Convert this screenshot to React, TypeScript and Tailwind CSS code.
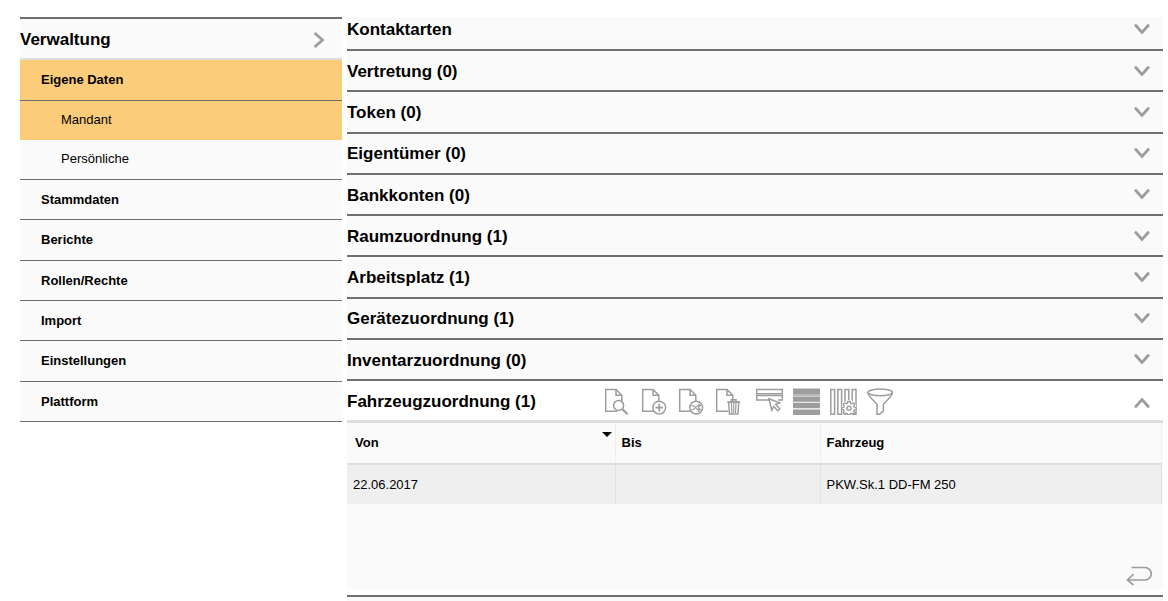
import type { ReactNode } from "react";

const menuItems = ["Stammdaten", "Berichte", "Rollen/Rechte", "Import", "Einstellungen", "Plattform"];

const sections = [
    "Vertretung (0)",
    "Token (0)",
    "Eigentümer (0)",
    "Bankkonten (0)",
    "Raumzuordnung (1)",
    "Arbeitsplatz (1)",
    "Gerätezuordnung (1)",
    "Inventarzuordnung (0)",
];

function Chevron({ className = "" }: { className?: string }) {
    return (
        <svg
            viewBox="0 0 16 12"
            className={`h-3 w-4 shrink-0 ${className}`}
            fill="none"
            stroke="#9d9d9d"
            strokeWidth="2.8"
            strokeLinecap="round"
        >
            <path d="M1.8 1.5 8 8.5 14.2 1.5" />
        </svg>
    );
}

function ToolButton({ label, children }: { label: string; children: ReactNode }) {
    return (
        <button type="button" aria-label={label} title={label} className="cursor-pointer">
            <svg
                viewBox="0 0 27 27"
                className="block h-[27px] w-[27px]"
                fill="none"
                stroke="#9d9d9d"
                strokeWidth="1.5"
            >
                {children}
            </svg>
        </button>
    );
}

function DocumentShape() {
    return (
        <>
            <path d="M13 23.2H1.7V1.5h10.3l5.8 5.8V13" />
            <path d="M12 1.5v5.8h5.8" />
        </>
    );
}

function Toolbar() {
    return (
        <div className="flex gap-3.5">
            <div className="flex gap-[10px]">
                <ToolButton label="Anzeigen">
                    <DocumentShape />
                    <circle cx="14.6" cy="17.4" r="5" fill="#fff" />
                    <path d="m18.2 21 5.4 5.2" strokeWidth="2.2" />
                </ToolButton>
                <ToolButton label="Neu">
                    <DocumentShape />
                    <circle cx="18.2" cy="19.6" r="6.4" fill="#fff" />
                    <path d="M18.2 15.8v7.6M14.4 19.6H22" strokeWidth="1.7" />
                </ToolButton>
                <ToolButton label="Zuordnen">
                    <DocumentShape />
                    <circle cx="18.2" cy="19.6" r="6.4" fill="#fff" />
                    <path
                        d="M13.4 17.6h1.8l4.6 4h3M13.4 21.6h1.8l4.6-4h3M20 15.4l2.4 2.2-2.4 2.1M20 19.5l2.4 2.1-2.4 2.2"
                        strokeWidth="1.2"
                    />
                </ToolButton>
                <ToolButton label="Löschen">
                    <DocumentShape />
                    <path d="M13.6 14h10.2l-.9 12H14.5z" fill="#fff" />
                    <path d="M12.2 14h13M16.4 13.5v-1.8h4.6v1.8" />
                    <path d="m16.4 15 .5 10M18.7 15v10M21 15l-.5 10" strokeWidth="1.2" />
                </ToolButton>
            </div>
            <div className="flex gap-[10px]">
                <ToolButton label="Zeile auswählen">
                    <path d="M.7 1.5h25.6v4.2H.7z" />
                    <path d="M14 12H.7V7.5h25.6V12H22" />
                    <path d="m12.8 10.8 10.8 4-4 1.8 4.2 4.2-1.9 1.9-4.2-4.2-1.8 3.6z" fill="#fff" />
                </ToolButton>
                <ToolButton label="Zeilen">
                    <path d="M0 .5h27v7.3H0zM0 8.6h27v5.2H0zM0 14.8h27v5.5H0zM0 21.5h27V27H0z" fill="#9d9d9d" stroke="none" />
                    <path d="M0 6.8h27" stroke="#c4c4c4" strokeWidth="1" />
                </ToolButton>
                <ToolButton label="Spalten einstellen">
                    <path d="M.8 1.5h3.8v24.7H.8zM7.8 1.5h3.8v24.7H7.8zM15 1.5h3.8v24.7H15zM22.2 1.5H26v24.7h-3.8z" />
                    <circle cx="19" cy="19.5" r="7.4" fill="#fff" stroke="none" />
                    <path
                        d="M17.8 13.5h2.4l.3 1.8 1.2.5 1.5-1 1.6 1.6-1 1.5.5 1.2 1.8.3v2.2l-1.8.3-.5 1.2 1 1.5-1.6 1.6-1.5-1-1.2.5-.3 1h-2.4l-.3-1-1.2-.5-1.5 1-1.6-1.6 1-1.5-.5-1.2-1.8-.3v-2.2l1.8-.3.5-1.2-1-1.5 1.6-1.6 1.5 1 1.2-.5z"
                        strokeWidth="1.4"
                    />
                    <circle cx="19" cy="20.3" r="2" strokeWidth="1.4" />
                </ToolButton>
                <ToolButton label="Filter">
                    <ellipse cx="13.2" cy="4.4" rx="12.2" ry="3.4" />
                    <path d="M1 4.8c0 3 2 4 4.4 6.6l4.6 4.8v10h2.6l3.8-3.4v-6.6l4.6-4.8c2.4-2.6 4.4-3.6 4.4-6.6" />
                </ToolButton>
            </div>
        </div>
    );
}

function Sidebar() {
    return (
        <nav className="w-[322px] shrink-0 border-t-2 border-[#6f6f6f] bg-[#fafafa]">
            <button
                type="button"
                className="flex h-[41px] w-full items-center justify-between border-b-2 border-[#dedede] pt-0.5 pr-3.5 text-[17px] font-bold"
            >
                Verwaltung
                <Chevron className="-rotate-90" />
            </button>
            <ul>
                <li>
                    <a
                        href="#"
                        className="flex h-[41px] items-center border-b border-[#6f6f6f] bg-[#fbcd7b] pl-[21px] font-bold"
                    >
                        Eigene Daten
                    </a>
                    <ul className="border-b border-[#6f6f6f]">
                        <li>
                            <a href="#" className="flex h-[39px] items-center bg-[#fbcd7b] pb-0.5 pl-[41px]">
                                Mandant
                            </a>
                        </li>
                        <li>
                            <a href="#" className="flex h-[39px] items-center pb-0.5 pl-[41px]">
                                Persönliche
                            </a>
                        </li>
                    </ul>
                </li>
            </ul>
            <ul className="grid min-h-[242px] auto-rows-fr">
                {menuItems.map((item) => (
                    <li key={item} className="border-b border-[#6f6f6f]">
                        <a href="#" className="flex h-full items-center pl-[21px] font-bold">
                            {item}
                        </a>
                    </li>
                ))}
            </ul>
        </nav>
    );
}

function VehicleTable() {
    return (
        <table className="w-full table-fixed border-collapse text-left">
            <thead>
                <tr className="h-[41px] border-b-2 border-[#dedede]">
                    <th className="relative w-[268px] border-r border-r-[#f0f0f0] pl-2">
                        Von
                        <svg viewBox="0 0 10 5" className="absolute top-[9px] right-[3px] h-[5px] w-[10px]">
                            <path d="M0 0h10L5 5z" />
                        </svg>
                    </th>
                    <th className="w-[205px] border-r border-r-[#f0f0f0] pl-1.5">Bis</th>
                    <th className="border-r border-r-[#f0f0f0] pl-1.5">Fahrzeug</th>
                </tr>
            </thead>
            <tbody>
                <tr className="h-10 bg-[#efefef]">
                    <td className="border-r border-[#e3e3e3] pl-1.5">22.06.2017</td>
                    <td className="border-r border-[#e3e3e3]"></td>
                    <td className="border-r border-[#e3e3e3] pl-1.5">PKW.Sk.1 DD-FM 250</td>
                </tr>
            </tbody>
        </table>
    );
}

export default function App() {
    return (
        <div className="flex items-start gap-[5px] bg-white pt-[17px] pr-[5px] pl-5 font-['Liberation_Sans',Arial,sans-serif] text-[13px] text-black">
            <Sidebar />
            <main className="min-w-0 flex-1">
                <button
                    type="button"
                    className="flex h-[34px] w-full items-center justify-between border-b-2 border-[#6f6f6f] bg-[#fafafa] pr-[13px] pb-1.5 text-[17px] font-bold"
                >
                    Kontaktarten
                    <Chevron />
                </button>
                <div className="grid min-h-[330px] auto-rows-fr">
                    {sections.map((section) => (
                        <button
                            key={section}
                            type="button"
                            className="flex w-full items-center justify-between border-b-2 border-[#6f6f6f] bg-[#fafafa] pt-0.5 pr-[13px] text-[17px] font-bold"
                        >
                            {section}
                            <Chevron />
                        </button>
                    ))}
                </div>
                <section className="border-b-2 border-[#6f6f6f] pb-1.5">
                    <header className="flex h-[42px] items-center border-b-3 border-[#dedede] pt-0.5 pr-[13px]">
                        <h2 className="w-[257px] text-[17px] font-bold">Fahrzeugzuordnung (1)</h2>
                        <Toolbar />
                        <button type="button" aria-label="Zuklappen" className="ml-auto">
                            <Chevron className="-scale-y-100" />
                        </button>
                    </header>
                    <div className="flex min-h-[166px] flex-col justify-between bg-[#fafafa] pr-px pb-[3px]">
                        <VehicleTable />
                        <button type="button" aria-label="Zurück" className="mr-[10px] self-end">
                            <svg
                                viewBox="0 0 26 20"
                                className="block h-5 w-[26px]"
                                fill="none"
                                stroke="#9d9d9d"
                                strokeWidth="1.7"
                            >
                                <path d="M5.5 1.5H19a6 6 0 0 1 0 12.5H1.5M7.5 8.2 1.5 14l6 5.2" />
                            </svg>
                        </button>
                    </div>
                </section>
                <div className="h-1 bg-[#fafafa]" />
            </main>
        </div>
    );
}
